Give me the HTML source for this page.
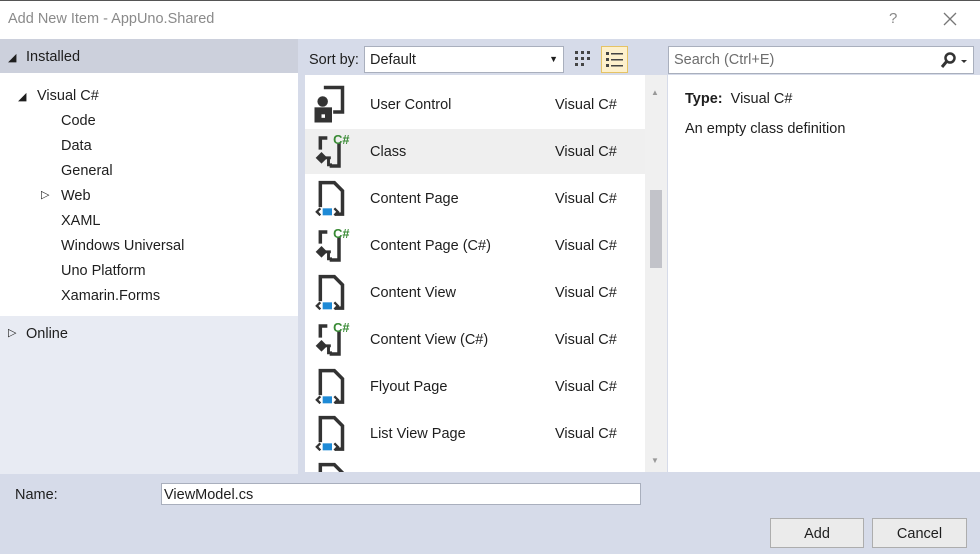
<!DOCTYPE html>
<html><head><meta charset="utf-8"><style>
*{margin:0;padding:0;box-sizing:border-box}
body{width:980px;height:554px;position:relative;background:#d6dbe9;font-family:"Segoe UI","Liberation Sans",sans-serif;font-size:14.5px;color:#1e1e1e;overflow:hidden}
.a{position:absolute}
.row{position:absolute;left:305px;width:340px;height:47px}
.row .n{position:absolute;left:65px;top:16px}
.row .t{position:absolute;left:250px;top:16px}
.row svg{position:absolute;left:6px;top:3px}
.tree div{position:absolute;white-space:nowrap}
</style></head><body>
<div class="a" style="left:0;top:0;width:980px;height:39px;background:#fff;border-top:1px solid #555"></div>
<div class="a" style="left:8px;top:11px;color:#8a8a8a;font-size:14.5px">Add New Item - AppUno.Shared</div>
<div class="a" style="left:889px;top:10px;color:#888;font-size:15px">?</div>
<svg class="a" style="left:943px;top:12px" width="14" height="14"><path d="M1 1L13 13M13 1L1 13" stroke="#777" stroke-width="1.3"/></svg>

<div class="a" style="left:0;top:39px;width:298px;height:34px;background:#ccd0dc"></div>
<div class="a" style="left:0;top:73px;width:298px;height:243px;background:#fff"></div>
<div class="a" style="left:0;top:316px;width:298px;height:158px;background:#e8ebf3"></div>
<div class="tree">
<div style="left:8px;top:51px;font-size:11px">◢</div><div style="left:26px;top:49px">Installed</div>
<div style="left:18px;top:90px;font-size:11px">◢</div><div style="left:37px;top:88px">Visual C#</div>
<div style="left:61px;top:113px">Code</div>
<div style="left:61px;top:138px">Data</div>
<div style="left:61px;top:163px">General</div>
<div style="left:41px;top:188px;font-size:11px">▷</div><div style="left:61px;top:188px">Web</div>
<div style="left:61px;top:213px">XAML</div>
<div style="left:61px;top:238px">Windows Universal</div>
<div style="left:61px;top:263px">Uno Platform</div>
<div style="left:61px;top:288px">Xamarin.Forms</div>
<div style="left:8px;top:326px;font-size:11px">▷</div><div style="left:26px;top:326px">Online</div>
</div>

<div class="a" style="left:309px;top:52px">Sort by:</div>
<div class="a" style="left:364px;top:46px;width:200px;height:27px;background:#fff;border:1px solid #a9afbd"><span style="position:absolute;left:5px;top:5px">Default</span><span style="position:absolute;right:5px;top:7px;font-size:9px">▼</span></div>
<svg class="a" style="left:574px;top:50px" width="20" height="20" fill="#444"><rect x="1" y="1" width="3" height="3"/><rect x="7" y="1" width="3" height="3"/><rect x="13" y="1" width="3" height="3"/><rect x="1" y="7" width="3" height="3"/><rect x="7" y="7" width="3" height="3"/><rect x="13" y="7" width="3" height="3"/><rect x="1" y="13" width="3" height="3"/><rect x="7" y="13" width="3" height="3"/></svg>
<div class="a" style="left:601px;top:46px;width:27px;height:27px;background:#fdf0cc;border:1px solid #e5c365"></div>
<svg class="a" style="left:605px;top:50px" width="20" height="20" fill="#444"><rect x="1" y="2" width="3" height="3"/><rect x="6" y="3" width="12" height="1.5"/><rect x="1" y="8" width="3" height="3"/><rect x="6" y="9" width="12" height="1.5"/><rect x="1" y="14" width="3" height="3"/><rect x="6" y="15" width="12" height="1.5"/></svg>
<div class="a" style="left:668px;top:46px;width:306px;height:28px;background:#fff;border:1px solid #a9afbd"><span style="position:absolute;left:5px;top:5px;color:#6d6d6d">Search (Ctrl+E)</span>
<svg style="position:absolute;left:270px;top:5px" width="30" height="18"><circle cx="11" cy="6" r="4.5" fill="none" stroke="#333" stroke-width="2.5"/><path d="M8 9L3 15" stroke="#333" stroke-width="3"/><path d="M22 8h6l-3 3z" fill="#333"/></svg></div>

<div class="a" style="left:305px;top:75px;width:340px;height:397px;background:#fff;overflow:hidden">
<div style="position:absolute;left:0;top:54px;width:340px;height:45px;background:#efefef"></div>
</div>
<div class="a" style="left:645px;top:75px;width:22px;height:397px;background:#f0f0f0"></div>
<div class="a" style="left:651px;top:88px;font-size:8px;color:#999">▲</div>
<div class="a" style="left:651px;top:456px;font-size:8px;color:#999">▼</div>
<div class="a" style="left:650px;top:190px;width:12px;height:78px;background:#c2c3c9"></div>
<div class="a" style="left:668px;top:75px;width:312px;height:397px;background:#fff"></div>
<div class="a" style="left:685px;top:91px"><b>Type:</b>&nbsp; Visual C#</div>
<div class="a" style="left:685px;top:121px">An empty class definition</div>

<div class="row" style="top:81px"><svg width="42" height="42" viewBox="0 0 36 36"><path d="M11 3H27V24H19" fill="none" stroke="#333" stroke-width="3"/><circle cx="10" cy="15" r="4.5" fill="#333"/><rect x="3" y="20" width="15" height="13" fill="#333"/><rect x="9" y="26" width="3" height="3" fill="#fff"/></svg><span class="n">User Control</span><span class="t">Visual C#</span></div>

<div class="row" style="top:128px"><svg width="42" height="42" viewBox="0 0 36 36"><path d="M14 6H8V16M24 10V30H16" fill="none" stroke="#333" stroke-width="3"/><text x="19" y="11" font-size="11" font-weight="bold" fill="#388a34" font-family="Liberation Sans">C#</text><path d="M4 23l5-5 5 5-5 5z" fill="#333"/><path d="M12 23h5M15 23v6h3" fill="none" stroke="#333" stroke-width="2.5"/></svg><span class="n">Class</span><span class="t">Visual C#</span></div>

<div class="row" style="top:175px"><svg width="42" height="42" viewBox="0 0 36 36"><path d="M8 25V4H20L27 11V31H21" fill="none" stroke="#333" stroke-width="3"/><rect x="10" y="26" width="8" height="6" fill="#1e8ad6"/><path d="M8 26l-3 3 3 3M20 26l3 3-3 3" fill="none" stroke="#333" stroke-width="2"/></svg><span class="n">Content Page</span><span class="t">Visual C#</span></div>

<div class="row" style="top:222px"><svg width="42" height="42" viewBox="0 0 36 36"><path d="M14 6H8V16M24 10V30H16" fill="none" stroke="#333" stroke-width="3"/><text x="19" y="11" font-size="11" font-weight="bold" fill="#388a34" font-family="Liberation Sans">C#</text><path d="M4 23l5-5 5 5-5 5z" fill="#333"/><path d="M12 23h5M15 23v6h3" fill="none" stroke="#333" stroke-width="2.5"/></svg><span class="n">Content Page (C#)</span><span class="t">Visual C#</span></div>

<div class="row" style="top:269px"><svg width="42" height="42" viewBox="0 0 36 36"><path d="M8 25V4H20L27 11V31H21" fill="none" stroke="#333" stroke-width="3"/><rect x="10" y="26" width="8" height="6" fill="#1e8ad6"/><path d="M8 26l-3 3 3 3M20 26l3 3-3 3" fill="none" stroke="#333" stroke-width="2"/></svg><span class="n">Content View</span><span class="t">Visual C#</span></div>

<div class="row" style="top:316px"><svg width="42" height="42" viewBox="0 0 36 36"><path d="M14 6H8V16M24 10V30H16" fill="none" stroke="#333" stroke-width="3"/><text x="19" y="11" font-size="11" font-weight="bold" fill="#388a34" font-family="Liberation Sans">C#</text><path d="M4 23l5-5 5 5-5 5z" fill="#333"/><path d="M12 23h5M15 23v6h3" fill="none" stroke="#333" stroke-width="2.5"/></svg><span class="n">Content View (C#)</span><span class="t">Visual C#</span></div>

<div class="row" style="top:363px"><svg width="42" height="42" viewBox="0 0 36 36"><path d="M8 25V4H20L27 11V31H21" fill="none" stroke="#333" stroke-width="3"/><rect x="10" y="26" width="8" height="6" fill="#1e8ad6"/><path d="M8 26l-3 3 3 3M20 26l3 3-3 3" fill="none" stroke="#333" stroke-width="2"/></svg><span class="n">Flyout Page</span><span class="t">Visual C#</span></div>

<div class="row" style="top:410px"><svg width="42" height="42" viewBox="0 0 36 36"><path d="M8 25V4H20L27 11V31H21" fill="none" stroke="#333" stroke-width="3"/><rect x="10" y="26" width="8" height="6" fill="#1e8ad6"/><path d="M8 26l-3 3 3 3M20 26l3 3-3 3" fill="none" stroke="#333" stroke-width="2"/></svg><span class="n">List View Page</span><span class="t">Visual C#</span></div>

<div class="row" style="top:457px;height:15px;overflow:hidden"><svg width="42" height="42" viewBox="0 0 36 36"><path d="M8 25V4H20L27 11V31" fill="none" stroke="#333" stroke-width="3"/></svg></div>

<div class="a" style="left:15px;top:487px">Name:</div>
<div class="a" style="left:161px;top:483px;width:480px;height:22px;background:#fff;border:1px solid #a9afbd;padding-left:2px;line-height:22px">ViewModel.cs</div>
<div class="a" style="left:770px;top:518px;width:94px;height:30px;background:#ebebeb;border:1px solid #adadad;text-align:center;line-height:30px">Add</div>
<div class="a" style="left:872px;top:518px;width:95px;height:30px;background:#ebebeb;border:1px solid #adadad;text-align:center;line-height:30px">Cancel</div>
</body></html>
